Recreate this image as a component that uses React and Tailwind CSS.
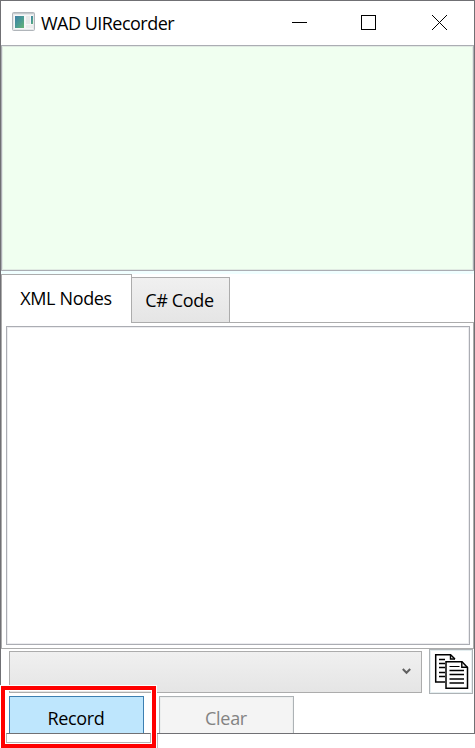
import React from "react";

function AppIcon() {
  return (
    <svg width="23" height="19" viewBox="0 0 23 19" className="block shrink-0">
      <defs>
        <linearGradient id="pane" x1="0" y1="0" x2="1" y2="1">
          <stop offset="0" stopColor="#3f7fa6" />
          <stop offset="0.5" stopColor="#4a9a94" />
          <stop offset="1" stopColor="#67b573" />
        </linearGradient>
      </defs>
      <rect x="0.5" y="0.5" width="22" height="18" rx="1" fill="#e6e8ea" stroke="#b0b5ba" />
      <path d="M1 1.5H22" stroke="#c5cacd" />
      <rect x="2" y="3" width="19" height="14" fill="#f6f7f7" />
      <rect x="3" y="4" width="9" height="12" fill="url(#pane)" />
      <rect x="14" y="4" width="4" height="8" fill="#e8e9e9" />
      <rect x="14" y="13" width="7" height="3" fill="#eceded" />
      <rect x="19" y="4" width="2" height="8" fill="url(#pane)" />
    </svg>
  );
}

function CopyIcon() {
  return (
    <svg width="35" height="36" viewBox="0 0 35 36" className="block">
      <path d="M11 28H1.7V0.7H16.5L21 5" fill="none" stroke="#000" strokeWidth="1.5" />
      <path d="M16.5 0.7V5H21" fill="none" stroke="#000" strokeWidth="1.4" />
      <path d="M5 5.5H11M5 9.5H11M5 13.5H11M5 18.5H11M5 22.5H11" stroke="#000" strokeWidth="1.6" />
      <path d="M12 7.7H28L33.5 13.5V34.3H12Z" fill="#fff" stroke="#000" strokeWidth="1.5" />
      <path d="M27.8 7.7V13.2H33.8" fill="none" stroke="#000" strokeWidth="1.4" />
      <path d="M15.5 12.5H25.5" stroke="#000" />
      <path d="M15.5 16.5H30M15.5 20.5H30M15.5 25H30M15.5 29H30" stroke="#000" strokeWidth="1.6" />
    </svg>
  );
}

function TitleBar() {
  return (
    <header className="flex h-11 shrink-0 items-start bg-white pl-[11px]">
      <div className="pt-[11px]">
        <AppIcon />
      </div>
      <h1 className="ml-[6px] mt-[10px] whitespace-nowrap text-[18px] leading-6 tracking-[-0.52px]">WAD UIRecorder</h1>
      <svg width="156" height="16" viewBox="0 0 156 16" className="ml-auto mr-[26px] mt-[13px] block" fill="none" stroke="#000">
        <path d="M0 8.5H15" />
        <rect x="69.5" y="1.5" width="14" height="14" />
        <path d="M140 1L155 16M155 1L140 16" />
      </svg>
    </header>
  );
}

export default function App() {
  return (
    <div className="relative h-[748px] w-[475px] overflow-hidden bg-white font-['Open_Sans','Noto_Sans',sans-serif] text-black">
      <main className="flex h-[734px] flex-col overflow-hidden border border-[#707074] bg-white">
        <TitleBar />
        <section className="h-[226px] shrink-0 border border-[#abadb3] bg-[#f0fff0] shadow-[inset_0_0_0_1px_#e1ebe3]" />
        <div className="h-[3px] shrink-0 bg-[#f0ffff]" />
        <nav className="z-10 -mb-px flex h-[49px] shrink-0 items-end">
          <button className="h-[49px] w-[131px] border border-b-0 border-[#acacac] bg-white pb-[2px] pr-px text-[18px] tracking-[-0.35px]">XML Nodes</button>
          <button className="-ml-px h-[46px] w-[99px] border border-[#acacac] bg-linear-to-b from-[#f0f0f0] to-[#e5e5e5] pr-[2px] text-[18px] tracking-[-0.35px]">C# Code</button>
        </nav>
        <section className="h-[327px] shrink-0 border border-[#acacac] p-[3px] pl-1">
          <div className="h-[319px] w-[464px] border border-[#abadb3] bg-white shadow-[inset_0_0_0_1px_#ececef]" />
        </section>
        <section className="flex h-[45px] shrink-0 items-start pl-2">
          <div className="mt-[2px] flex h-[42px] w-[413px] items-center justify-end border border-[#acacac] bg-linear-to-b from-[#f0f0f0] to-[#e5e5e5] pr-[10px]">
            <svg width="9" height="7" viewBox="0 0 9 7" className="-mt-[2px] block" fill="none" stroke="#606060" strokeWidth="2">
              <path d="M0.8 1L4.5 4.8L8.2 1" />
            </svg>
          </div>
          <button aria-label="Copy" className="ml-[7px] flex h-[45px] w-[44px] items-start border border-[#adb2b5] bg-white pl-1 pt-1 shadow-[inset_0_0_0_1px_#e5eef0]">
            <CopyIcon />
          </button>
        </section>
        <section className="mt-[2px] flex h-[37px] shrink-0 items-start gap-[15px] overflow-hidden pl-2">
          <button className="h-[44px] w-[135px] shrink-0 border border-[#3c7fb1] bg-[#bee6fd] pr-px text-[18px] tracking-[-0.35px]">Record</button>
          <button className="h-[44px] w-[135px] shrink-0 border border-[#adb2b5] bg-[#f4f4f4] pr-px text-[18px] tracking-[-0.3px] text-[#838383] shadow-[inset_0_0_0_1px_#eceeee]">Clear</button>
        </section>
      </main>
      <div className="h-[14px] w-[158px] border-r border-[#bdbdbd]" />
      <div className="absolute left-px top-[686px] z-20 flex h-[62px] w-[155px] flex-col justify-end border-4 border-[#ff0000] px-px pb-px shadow-[0_0_0_1px_#fff,inset_0_0_0_1px_#fff]">
        <div className="h-[10px] border border-[#b5b5b5] border-t-[#707074] bg-white" />
      </div>
    </div>
  );
}
